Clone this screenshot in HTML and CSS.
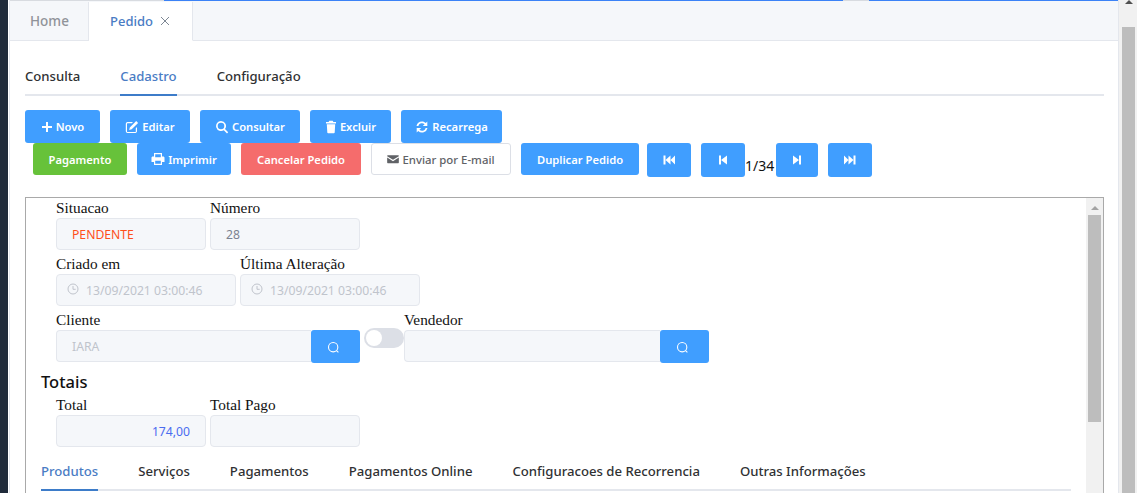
FILE: index.html
```html
<!DOCTYPE html>
<html lang="en">

<head>
    <meta charset="UTF-8">
    <meta name="viewport" content="width=device-width, initial-scale=1.0">
    <title>Pedido</title>
    <link rel="stylesheet" href="styles.css">
</head>

<body>
    <div class="side-strip"></div>

    <div class="main">
        <div class="top-line">
            <div class="line-gray line-a"></div>
            <div class="line-blue line-b"></div>
            <div class="line-gray line-c"></div>
            <div class="line-blue line-d"></div>
        </div>

        <!-- Page tabs -->
        <div class="page-tabs">
            <div class="page-tab">Home</div>
            <div class="page-tab active">Pedido
                <svg class="close-icon" viewBox="0 0 10 10" width="10" height="10">
                    <path d="M1 1L9 9M9 1L1 9" stroke="#7d8794" stroke-width="1" fill="none" />
                </svg>
            </div>
        </div>

        <div class="content">
            <div class="sub-tabs">
                <div class="sub-tab">Consulta</div>
                <div class="sub-tab active">Cadastro</div>
                <div class="sub-tab">Configuração</div>
            </div>

            <!-- Buttons -->
            <div class="btn-row first">
                <button class="btn w-novo">
                    <svg class="icon small" viewBox="0 0 12 12"><path d="M5 1h2v4h4v2H7v4H5V7H1V5h4z" /></svg>Novo
                </button>
                <button class="btn w-editar">
                    <svg class="icon" viewBox="0 0 14 14"><path d="M2.5 2H8L6.8 3.2H2.6a.6.6 0 0 0-.6.6v7.6c0 .3.3.6.6.6h7.6c.3 0 .6-.3.6-.6V8.2L12 7v4.5A2 2 0 0 1 10.500 13h-8A1.800 1.800 0 0 1 .8 11.300V3.700A1.800 1.800 0 0 1 2.500 2zM11.200 1l1.900 1.900-6.400 6.400-2.500.6.600-2.500z" /></svg>Editar
                </button>
                <button class="btn w-consultar">
                    <svg class="icon" viewBox="0 0 14 14"><path fill-rule="evenodd" d="M6 1a5 5 0 0 1 4 8l3.200 3.200-1.200 1.200L8.800 10.200A5 5 0 1 1 6 1zm0 1.700a3.300 3.300 0 1 0 0 6.600 3.300 3.300 0 0 0 0-6.600z" /></svg>Consultar
                </button>
                <button class="btn w-excluir">
                    <svg class="icon small" viewBox="0 0 12 14"><path d="M4.300 .8h3.400l.7 1.200H11v1.400H1V2h2.600zM1.800 4.200h8.400l-.5 8.300c0 .4-.4.7-.8.700H3.100c-.4 0-.8-.3-.8-.7z" /></svg>Excluir
                </button>
                <button class="btn w-recarrega">
                    <svg class="icon" viewBox="0 0 14 14"><path d="M7 1.500c1.500 0 2.800.6 3.800 1.500L12.300 1.500V6H7.800l1.800-1.800A3.800 3.800 0 0 0 3.300 6H1.500A5.600 5.600 0 0 1 7 1.500zM1.700 8h4.500l-1.800 1.800a3.800 3.800 0 0 0 6.300-1.800h1.800A5.600 5.600 0 0 1 3.200 11L1.700 12.500z" /></svg>Recarrega
                </button>
            </div>

            <div class="btn-row second">
                <button class="btn green w-pagamento">Pagamento</button>
                <button class="btn w-imprimir">
                    <svg class="icon" viewBox="0 0 14 14"><path fill-rule="evenodd" d="M3 1h8v3.500h1.200c.7 0 1.300.6 1.300 1.300v4.200h-2.500v3H3v-3H.5V5.800c0-.7.6-1.300 1.300-1.300H3zm1.200 1.200v3h5.600v-3zm0 6.500v3.100h5.600V8.700z" /></svg>Imprimir
                </button>
                <button class="btn red w-cancelar">Cancelar Pedido</button>
                <button class="btn plain w-enviar">
                    <svg class="icon small" viewBox="0 0 14 14"><path d="M.8 2.500h12.400c.3 0 .6.300.6.600v.6L7 8 .2 3.700v-.6c0-.3.300-.6.600-.6zM.2 5.200L7 9.500l6.800-4.300v6c0 .4-.3.700-.7.700H.900c-.4 0-.7-.3-.7-.7z" /></svg>Enviar por E-mail
                </button>
                <button class="btn w-duplicar">Duplicar Pedido</button>
                <button class="btn nav w-nav-a">
                    <svg class="icon" viewBox="0 0 14 14"><path d="M1.500 2.500h2v9h-2zM3.500 7l5-4.500v9zM8.500 7l4.500-4.500v9z" /></svg>
                </button>
                <button class="btn nav w-nav-b">
                    <svg class="icon" viewBox="0 0 14 14"><path d="M3 2.500h2v9H3zM5 7l6-4.500v9z" /></svg>
                </button>
                <span class="pager">1/34</span>
                <button class="btn nav w-nav-c">
                    <svg class="icon" viewBox="0 0 14 14"><path d="M3 2.500l6 4.500-6 4.500zM9 2.500h2v9H9z" /></svg>
                </button>
                <button class="btn nav w-nav-d">
                    <svg class="icon" viewBox="0 0 14 14"><path d="M1 2.500L5.500 7 1 11.500zM5.500 2.500l5 4.500-5 4.500zM10.500 2.500h2v9h-2z" /></svg>
                </button>
            </div>

            <!-- Scrolling form -->
            <div class="form-box">
                <div class="form-inner">
                    <div class="field-row">
                        <div class="field w-150">
                            <label>Situacao</label>
                            <div class="input pending">PENDENTE</div>
                        </div>
                        <div class="field w-150">
                            <label>Número</label>
                            <div class="input muted">28</div>
                        </div>
                    </div>

                    <div class="field-row">
                        <div class="field w-180">
                            <label>Criado em</label>
                            <div class="input date">
                                <svg class="clock" viewBox="0 0 12 12"><circle cx="6" cy="6" r="5" /><path d="M6 3v3.300h2.700" /></svg>
                                13/09/2021 03:00:46
                            </div>
                        </div>
                        <div class="field w-180">
                            <label>Última Alteração</label>
                            <div class="input date">
                                <svg class="clock" viewBox="0 0 12 12"><circle cx="6" cy="6" r="5" /><path d="M6 3v3.300h2.700" /></svg>
                                13/09/2021 03:00:46
                            </div>
                        </div>
                    </div>

                    <div class="field-row tight">
                        <div class="field">
                            <label>Cliente</label>
                            <div class="input-group">
                                <div class="input light w-255">IARA</div>
                                <button class="search-btn">
                                    <svg viewBox="0 0 12 12" width="13" height="13"><circle cx="5.700" cy="5.700" r="4.300" /><path d="M8.800 8.800L10.500 10.500" /></svg>
                                </button>
                            </div>
                        </div>
                        <div class="switch"><span class="knob"></span></div>
                        <div class="field">
                            <label>Vendedor</label>
                            <div class="input-group">
                                <div class="input w-256"></div>
                                <button class="search-btn">
                                    <svg viewBox="0 0 12 12" width="13" height="13"><circle cx="5.700" cy="5.700" r="4.300" /><path d="M8.800 8.800L10.500 10.500" /></svg>
                                </button>
                            </div>
                        </div>
                    </div>

                    <h3 class="section-title">Totais</h3>

                    <div class="field-row">
                        <div class="field w-150">
                            <label>Total</label>
                            <div class="input total">174,00</div>
                        </div>
                        <div class="field w-150">
                            <label>Total Pago</label>
                            <div class="input"></div>
                        </div>
                    </div>

                    <div class="detail-tabs">
                        <div class="detail-tab active">Produtos</div>
                        <div class="detail-tab">Serviços</div>
                        <div class="detail-tab">Pagamentos</div>
                        <div class="detail-tab">Pagamentos Online</div>
                        <div class="detail-tab">Configuracoes de Recorrencia</div>
                        <div class="detail-tab">Outras Informações</div>
                    </div>
                </div>

                <div class="inner-scroll">
                    <div class="arrow-up"></div>
                    <div class="inner-thumb"></div>
                </div>
            </div>
        </div>
    </div>

    <div class="page-scroll">
        <div class="arrow-up dark"></div>
        <div class="page-thumb"></div>
    </div>
</body>

</html>
```

FILE: styles.css
```css
* {
    box-sizing: border-box;
}

html,
body {
    height: 100%;
}

body {
    margin: 0;
    display: flex;
    overflow: hidden;
    background: #fff;
    font-family: 'Noto Sans', sans-serif;
    color: #303133;
}

.side-strip {
    width: 9px;
    background: #1f2a3a;
    border-right: 1px solid #fff;
    flex: none;
}

.main {
    width: 1110px;
    flex: none;
    border-left: 1px solid #e4e7ed;
    border-right: 1px solid #e4e7ed;
    overflow: hidden;
}

.top-line {
    display: flex;
    height: 2px;
    align-items: flex-start;
    background: #f5f7fa;
}

.line-gray {
    height: 1px;
    background: #d8dbe0;
}

.line-blue {
    height: 1px;
    background: #3b82f6;
}

.line-a {
    width: 154px;
}

.line-b {
    width: 679px;
}

.line-c {
    width: 26px;
}

.line-d {
    flex: 1;
}

/* Page tabs */
.page-tabs {
    display: flex;
    height: 39px;
    background: #f5f7fa;
    border-bottom: 1px solid #e4e7ed;
}

.page-tab {
    height: 39px;
    padding: 0 20px;
    width: 79px;
    line-height: 39px;
    font-size: 13.500px;
    font-weight: 500;
    color: #909399;
    border-right: 1px solid #e4e7ed;
}

.page-tab.active {
    width: 104px;
    padding-left: 21px;
    font-size: 13px;
    background: #fff;
    color: #4a7cc4;
    border-bottom: 1px solid #fff;
}

.close-icon {
    margin-left: 4px;
}

.content {
    padding: 24px 14px 0 15px;
}

.sub-tabs {
    display: flex;
    gap: 40px;
    height: 31px;
    border-bottom: 2px solid #e4e7ed;
}

.sub-tab {
    height: 31px;
    line-height: 22px;
    font-size: 13.150px;
    font-weight: 500;
    color: #303133;
}

.sub-tab.active {
    color: #4a7cc4;
    border-bottom: 2px solid #3d7cc9;
}

/* Buttons */
.btn-row {
    display: flex;
    align-items: flex-start;
    gap: 10px;
}

.btn-row.first {
    margin-top: 14px;
}

.btn-row.second {
    padding-left: 8px;
}

.btn {
    height: 33px;
    padding: 0;
    display: flex;
    align-items: center;
    justify-content: center;
    gap: 3px;
    border: none;
    border-radius: 3px;
    background: #409eff;
    color: #fff;
    font-family: 'Noto Sans', sans-serif;
    font-size: 11.200px;
    font-weight: 600;
}

.second .btn {
    height: 32px;
}

.second .btn.nav {
    height: 34px;
}

.icon {
    width: 14px;
    height: 14px;
    fill: currentColor;
}

.icon.small {
    width: 12px;
}

.w-novo {
    width: 75px;
}

.w-editar {
    width: 80px;
}

.w-consultar {
    width: 100px;
}

.w-excluir {
    width: 81px;
}

.w-recarrega {
    width: 101px;
}

.w-pagamento {
    width: 94px;
}

.w-imprimir {
    width: 94px;
}

.w-cancelar {
    width: 120px;
}

.w-enviar {
    width: 140px;
}

.w-duplicar {
    width: 118px;
}

.w-nav-a {
    width: 44px;
    margin-left: -2px;
}

.w-nav-b {
    width: 44px;
}

.w-nav-c {
    width: 42px;
}

.w-nav-d {
    width: 44px;
}

.green {
    background: #67c23a;
}

.red {
    background: #f56c6c;
}

.btn.plain {
    background: #fff;
    border: 1px solid #dcdfe6;
    color: #606266;
    font-size: 11.400px;
    font-weight: 500;
}

.pager {
    margin: 12px -10px 0;
    width: 31px;
    font-size: 14px;
    line-height: 22px;
    color: #111;
}

/* Form box */
.form-box {
    display: flex;
    height: 320px;
    margin-top: 20px;
    margin-right: 0;
    border: 1px solid #a9a9a9;
}

.form-inner {
    flex: 1;
    padding: 0 15px;
    min-width: 0;
}

.field-row {
    display: flex;
    gap: 4px;
    padding-left: 15px;
    margin-bottom: 4px;
}

.field {
    display: block;
}

.field-row.tight {
    margin-bottom: 0;
}

.w-150 {
    width: 150px;
}

.w-180 {
    width: 180px;
}

label {
    display: block;
    height: 20px;
    line-height: 19px;
    font-family: 'Liberation Serif', serif;
    font-size: 15.300px;
    color: #111;
}

.input {
    height: 32px;
    padding: 0 15px;
    line-height: 31px;
    font-size: 12.200px;
    background: #f5f7fa;
    border: 1px solid #e4e7ed;
    border-radius: 4px;
    color: #c0c4cc;
}

.pending {
    color: #ff4f1a;
}

.muted {
    color: #7c8290;
}

.light {
    color: #c0c4cc;
}

.total {
    text-align: right;
    color: #4a6cf0;
}

.date {
    display: flex;
    align-items: center;
    gap: 7px;
    padding-left: 10px;
}

.clock {
    width: 12px;
    height: 12px;
    margin-top: -3px;
    fill: none;
    stroke: #c0c4cc;
    stroke-width: 1;
}

.input-group {
    display: flex;
    align-items: flex-start;
}

.w-255 {
    width: 255px;
    border-radius: 4px 0 0 4px;
    border-right: none;
}

.w-256 {
    width: 256px;
    border-radius: 4px 0 0 4px;
    border-right: none;
}

.search-btn {
    width: 49px;
    height: 33px;
    padding: 0 5px 0 0;
    border: none;
    border-radius: 3px;
    background: #409eff;
}

.search-btn svg {
    fill: none;
    stroke: #fff;
    stroke-width: 1;
    vertical-align: middle;
}

.switch {
    width: 40px;
    height: 20px;
    margin: 18px -4px 0 0;
    padding: 2px;
    background: #dcdfe6;
    border-radius: 10px;
}

.knob {
    display: block;
    width: 16px;
    height: 16px;
    background: #fff;
    border-radius: 50%;
}

.section-title {
    margin: 7px 0 1px;
    height: 24px;
    line-height: 24px;
    font-size: 16.500px;
    font-weight: 500;
    color: #111;
}

/* Detail tabs */
.detail-tabs {
    display: flex;
    gap: 40px;
    height: 40px;
    border-bottom: 2px solid #e4e7ed;
}

.detail-tab {
    height: 40px;
    line-height: 40px;
    font-size: 13.150px;
    font-weight: 500;
    color: #303133;
}

.detail-tab.active {
    color: #4a7cc4;
    border-bottom: 2px solid #3d7cc9;
}

/* Scrollbars */
.inner-scroll {
    width: 17px;
    flex: none;
    background: #f1f1f1;
    padding: 8px 2px 0;
}

.inner-thumb {
    height: 207px;
    margin-top: 5px;
    background: #bdbdbd;
}

.arrow-up {
    width: 0;
    height: 0;
    margin: 0 auto;
    border-left: 4px solid transparent;
    border-right: 4px solid transparent;
    border-bottom: 4px solid #a3a3a3;
}

.page-scroll {
    width: 18px;
    flex: none;
    background: #f1f1f1;
    padding: 0 2px 0 3px;
}

.arrow-up.dark {
    margin-top: 0;
    border-bottom-color: #505050;
}

.page-thumb {
    height: 466px;
    margin-top: 23px;
    background: #bdbdbd;
}
```
